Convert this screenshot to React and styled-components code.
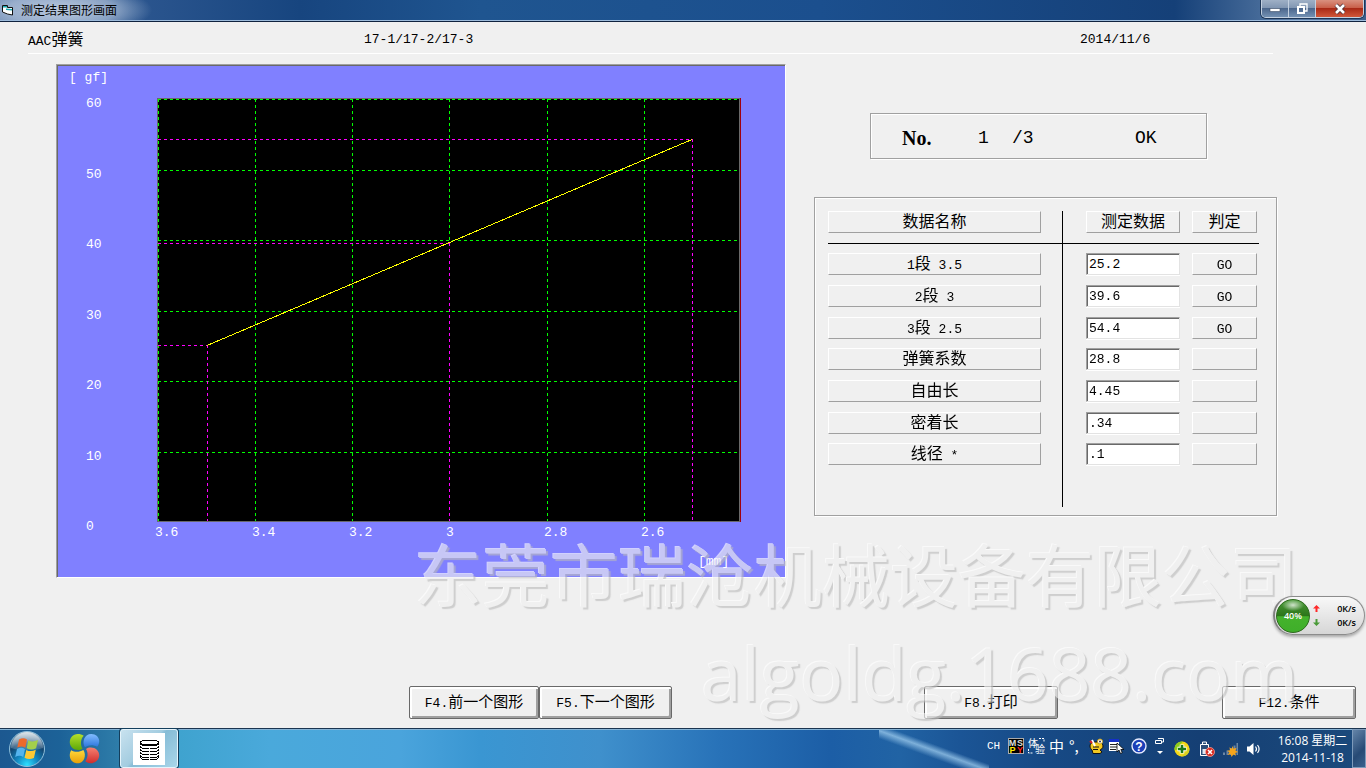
import React from "react";
import styled, { createGlobalStyle, css } from "styled-components";

const MONO = '"Liberation Mono", "Noto Sans CJK SC", monospace';
const CJK = '"Noto Sans CJK SC", sans-serif';
const UI = '"Open Sans", "Noto Sans CJK SC", sans-serif';

const GlobalStyle = createGlobalStyle`
  *, *::before, *::after { box-sizing: border-box; }
  html, body { margin: 0; padding: 0; }
  body { background: #f0f0f0; color: #000; font-family: ${CJK}; font-size: 16px; }
  button, input { font: inherit; color: inherit; margin: 0; }
  h1, p { margin: 0; font-weight: 400; }
`;

const Screen = styled.div`
  position: relative;
  display: flex;
  flex-direction: column;
  min-height: 100vh;
  overflow: hidden;
`;

/* ---------- title bar ---------- */

const TitleBar = styled.header`
  display: flex;
  align-items: flex-start;
  justify-content: space-between;
  height: 22px;
  padding-right: 2px;
  border-bottom: 1px solid #10233f;
  box-shadow: inset 0 -1px 0 #9dbbdb;
  background:
    radial-gradient(ellipse 90px 26px at 62px 10px, rgba(214, 224, 238, 0.8) 0, rgba(190, 205, 225, 0.6) 60%, rgba(150, 175, 205, 0) 100%),
    linear-gradient(90deg, #6684b0 0, #2c568f 130px, #17457f 300px, #1f5590 480px, #1b4f8e 60%, #154078 86%, #5a7ca6 95%, #3c5f8c 100%);
`;

const TitleText = styled.h1`
  display: flex;
  align-items: center;
  gap: 8px;
  height: 20px;
  padding-left: 2px;
  font-size: 12px;
  line-height: 20px;
`;

const Controls = styled.div`
  display: flex;
  height: 18px;
  border: 1px solid #c3d0e0;
  border-top: 0;
  border-radius: 0 0 5px 5px;
  overflow: hidden;
  box-shadow: 0 0 0 1px #1d3556;
`;

const ControlButton = styled.button`
  display: flex;
  align-items: center;
  justify-content: center;
  width: ${(p) => (p.$close ? 47 : 27)}px;
  padding: 0;
  border: 0;
  border-right: 1px solid #c3d0e0;
  background: ${(p) =>
    p.$close
      ? "linear-gradient(#d9917f 0, #c9604a 45%, #a92a16 50%, #d0573a 100%)"
      : "linear-gradient(#9fb0c6 0, #8297b3 45%, #4c678d 50%, #7390b3 100%)"};
  &:last-child { border-right: 0; }
`;

/* ---------- window content ---------- */

const Body = styled.main`
  position: relative;
  flex: 1;
  display: flex;
  flex-direction: column;
  background: #f0f0f0;
`;

const InfoBar = styled.div`
  display: grid;
  grid-template-columns: 336px 1fr 193px;
  align-items: center;
  height: 32px;
  margin: 0 93px 10px 28px;
  padding-top: 4px;
  border-bottom: 1px solid #fff;
  line-height: 24px;
`;

const Latin = styled.span`
  font-family: ${MONO};
  font-size: 13px;
  white-space: pre;
`;

const Workspace = styled.div`
  display: grid;
  grid-template-columns: minmax(0, 1fr) 463px;
  column-gap: 28px;
  align-items: start;
  padding: 0 89px 0 56px;
`;

const ChartPanel = styled.figure`
  margin: 0;
  border: 1px solid;
  border-color: #a0a0a0 #fff #fff #a0a0a0;
  box-shadow: inset 1px 1px 0 #696969;
  background: #8080ff;
  svg { display: block; width: 100%; height: auto; }
`;

const groove = css`
  border: 1px solid #a0a0a0;
  box-shadow: 1px 1px 0 #fff, inset 1px 1px 0 #fff;
`;

const Side = styled.div`
  display: flex;
  flex-direction: column;
  gap: 38px;
  padding-top: 49px;
`;

const Counter = styled.div`
  ${groove}
  display: grid;
  grid-template-columns: 76px 34px 123px auto;
  align-items: center;
  height: 46px;
  margin: 0 70px 0 56px;
  padding: 4px 0 0 31px;
  font-family: ${MONO};
  font-size: 18px;
  line-height: 24px;
`;

const CounterTitle = styled.strong`
  font-family: "Liberation Serif", serif;
  font-size: 20px;
`;

const TablePanel = styled.section`
  ${groove}
  padding: 13px 17px 8px 13px;
`;

const Table = styled.table`
  width: 100%;
  table-layout: fixed;
  border-spacing: 0;
  th, td { padding: 0; vertical-align: top; font-weight: 400; }
  th:first-child, td:first-child { padding-right: 21px; border-right: 1px solid #000; }
  th:nth-child(2), td:nth-child(2) { padding-left: 23px; padding-right: 12px; }
  th:nth-child(3), td:nth-child(3) { padding-right: 2px; }
`;

const HeadRow = styled.tr`
  height: 33px;
  th { border-bottom: 1px solid #000; }
`;

const DataRow = styled.tr`
  height: 32px;
  &:nth-child(3n) { height: 31px; }
  &:last-child { height: 73px; }
  && > * { padding-top: 9px; }
`;

const Plate = styled.div`
  display: block;
  height: 22px;
  border: 1px solid;
  border-color: #fff #a0a0a0 #a0a0a0 #fff;
  line-height: 16px;
  text-align: center;
  white-space: nowrap;
`;

const ValueInput = styled.input`
  display: block;
  width: 100%;
  height: 22px;
  padding: 0 0 0 2px;
  border: 1px solid;
  border-color: #a0a0a0 #e3e3e3 #e3e3e3 #a0a0a0;
  border-radius: 0;
  outline: 0;
  background: #fff;
  box-shadow: inset 1px 1px 0 #696969, 0 1px 0 #fff;
  font-family: ${MONO};
  font-size: 13px;
`;

const Actions = styled.div`
  display: grid;
  grid-template-columns: 409fr 130px 133px 252fr 134px 164fr 134px;
  margin-top: auto;
  padding: 0 10px 9px 0;
`;

const ActionButton = styled.button`
  grid-column: ${(p) => p.$col};
  height: 33px;
  padding: 0;
  border: 1px solid #696969;
  border-radius: 2px;
  background: #f0f0f0;
  box-shadow: inset 2px 2px 0 #fff, inset -2px -2px 0 #a0a0a0;
  font-size: 15px;
  line-height: 28px;
`;

/* ---------- overlays ---------- */

const Watermark = styled.div`
  position: absolute;
  right: 68px;
  bottom: 4px;
  display: flex;
  flex-direction: column;
  align-items: flex-end;
  opacity: 0.64;
  pointer-events: none;
  color: #f0f0f0;
  text-shadow: -1px -1px 0 #fff, 2px 2px 1px #bcbcbc;
  white-space: nowrap;
`;

const WatermarkName = styled.p`
  font-size: 68px;
  line-height: 98px;
`;

const WatermarkSite = styled.p`
  font-family: "Open Sans", sans-serif;
  font-size: 73px;
  line-height: 102px;
`;

const NetMeter = styled.aside`
  position: absolute;
  right: 1px;
  bottom: 93px;
  display: flex;
  align-items: center;
  gap: 3px;
  width: 92px;
  height: 39px;
  padding: 0 8px 0 1px;
  border: 1px solid #8c8c8c;
  border-left: 2px solid #808080;
  border-radius: 20px;
  background: linear-gradient(#f8f8f8, #d6d6d6);
  box-shadow: 0 2px 3px rgba(0, 0, 0, 0.3);
  font-family: ${UI};
  font-size: 9px;
  font-weight: 600;
`;

const MeterBall = styled.div`
  width: 34px;
  height: 34px;
  border: 1px solid #2c6a1c;
  border-radius: 50%;
  background:
    radial-gradient(ellipse 11px 6px at 50% 16%, rgba(255, 255, 255, 0.75), rgba(255, 255, 255, 0)),
    linear-gradient(#4a9a38 0, #2c7419 50%, #45b32c 52%, #3fae2a 100%);
  color: #fff;
  line-height: 32px;
  text-align: center;
`;

const Rates = styled.div`
  flex: 1;
  display: grid;
  grid-template-columns: 8px 1fr;
  align-items: center;
  line-height: 14px;
  text-align: right;
`;

/* ---------- taskbar ---------- */

const Taskbar = styled.footer`
  display: flex;
  align-items: center;
  justify-content: space-between;
  height: 40px;
  border-top: 1px solid #1b3550;
  box-shadow: inset 0 1px 0 #86b4d6;
  background:
    linear-gradient(to top right, transparent 38%, rgba(165, 210, 242, 0.7) 48%, transparent 56%) 70% 0 / 110px 40px no-repeat,
    linear-gradient(90deg, #1c5890 0, #1c6298 60px, #2d7ba8 115px, #3fa3cf 180px, #4aa9db 270px, #4aa4dc 400px, #3a96d2 480px, #3f90cc 600px, #2872b8 720px, #1c5ea6 830px, #2163a4 900px, #1b5596 960px, #174a86 1040px, #153f74 1200px, #1b4a7c 100%);
`;

const TaskGroup = styled.nav`
  display: flex;
  align-items: center;
  height: 100%;
`;

const TaskButton = styled.button`
  display: flex;
  align-items: center;
  justify-content: center;
  width: ${(p) => p.$w}px;
  height: 39px;
  padding: 0;
  border: 0;
  background: none;
  ${(p) =>
    p.$active &&
    css`
      margin-left: 6px;
      border: 1px solid #e6f4fb;
      border-radius: 3px;
      box-shadow: 0 0 0 1px #143e5c;
      background: linear-gradient(135deg, #c8e2ef 0, #a3cce0 45%, #86bcd6 50%, #a9d6ea 100%);
    `}
`;

const Tray = styled.div`
  display: flex;
  align-items: center;
  gap: 4px;
  height: 100%;
  color: #fff;
  svg { display: block; flex: none; overflow: visible; }
`;

const TrayItem = styled.span`
  width: ${(p) => p.$w}px;
  padding-bottom: ${(p) => (p.$low ? 0 : 5)}px;
  font-family: ${(p) => (p.$mono ? MONO : CJK)};
  font-size: ${(p) => (p.$mono ? 11 : 15)}px;
  line-height: 16px;
  white-space: nowrap;
`;

const Clock = styled.time`
  width: 71px;
  font-family: ${UI};
  font-size: 12px;
  line-height: 17px;
  text-align: center;
  white-space: nowrap;
`;

const ShowDesktop = styled.button`
  width: 14px;
  height: 39px;
  padding: 0;
  border: 1px solid #7e9bbb;
  background: linear-gradient(135deg, #6484a8, #274a75 60%, #3a618d);
`;

/* Latin runs are set in the half-width face, everything else in the CJK face. */
function Mixed({ children }) {
  return children
    .split(/([\u0020-\u007e]+)/)
    .filter(Boolean)
    .map((run, i) => (/^[\u0020-\u007e]/.test(run) ? <Latin key={i}>{run}</Latin> : run));
}

const X_TICKS = [
  ["3.6", 101], ["3.4", 198], ["3.2", 295], ["3", 392], ["2.8", 490], ["2.6", 587],
];
const Y_TICKS = [
  ["60", 34], ["50", 105], ["40", 175], ["30", 246], ["20", 316], ["10", 387], ["0", 457],
];
const POINTS = [[150, 280], [392, 178], [635, 74]];

function Chart() {
  return (
    <svg viewBox="0 0 728 512" role="img" aria-label="gf / mm">
      <rect x="100" y="33" width="583" height="424" fill="#696969" />
      <rect x="101" y="34" width="581" height="422" fill="#000" />
      <rect x="683" y="33" width="1" height="424" fill="#a00010" />
      <g shapeRendering="crispEdges" strokeDasharray="3 3" stroke="#00ff00">
        {X_TICKS.map(([t, x]) => (
          <line key={t} x1={x + 0.5} x2={x + 0.5} y1="34" y2={t === "3" ? 178 : 456} />
        ))}
        {Y_TICKS.slice(0, -1).map(([t, y]) => (
          <line key={t} x1="101" x2="682" y1={y + 0.5} y2={y + 0.5} />
        ))}
      </g>
      <g shapeRendering="crispEdges" strokeDasharray="3 3" stroke="#ff00ff">
        {POINTS.map(([x, y]) => (
          <React.Fragment key={x}>
            <line x1="101" x2={x} y1={y + 0.5} y2={y + 0.5} />
            <line x1={x + 0.5} x2={x + 0.5} y1={y} y2="456" />
          </React.Fragment>
        ))}
      </g>
      <line x1="150" y1="280.5" x2="635" y2="74.5" stroke="#ffff00" shapeRendering="crispEdges" />
      <g fill="#fff" fontFamily="Liberation Mono, monospace" fontSize="13" xmlSpace="preserve">
        <text x="12" y="16">{"[ gf]"}</text>
        {Y_TICKS.map(([t, y]) => <text key={t} x="29" y={y + 8}>{t}</text>)}
        {X_TICKS.map(([t, x]) => <text key={t} x={x - 3} y="471">{t}</text>)}
        <text x="641" y="500">[mm]</text>
      </g>
    </svg>
  );
}

const ROWS = [
  ["1段 3.5", "25.2", "GO"],
  ["2段 3", "39.6", "GO"],
  ["3段 2.5", "54.4", "GO"],
  ["弹簧系数", "28.8", ""],
  ["自由长", "4.45", ""],
  ["密着长", ".34", ""],
  ["线径 *", ".1", ""],
];

const ACTIONS = [
  [2, "F4.前一个图形"],
  [3, "F5.下一个图形"],
  [5, "F8.打印"],
  [7, "F12.条件"],
];

const FormIcon = () => (
  <svg width="11" height="12" viewBox="0 0 11 12">
    <path d="M0.5 1.500h5v2h5v7.500l-5-1-5-2z" fill="#fff" stroke="#111" />
    <path d="M1 2h4v1.500H1zM4 4.500l6 .5v1.500L4 6z" fill="#18a8b0" />
  </svg>
);

const StartOrb = () => (
  <svg width="38" height="38" viewBox="0 0 38 38">
    <defs>
      <radialGradient id="orb" cx=".5" cy=".95" r=".9">
        <stop offset="0" stopColor="#2de0ff" />
        <stop offset=".35" stopColor="#1286c0" />
        <stop offset=".7" stopColor="#12446f" />
        <stop offset="1" stopColor="#6f8fa8" />
      </radialGradient>
      <linearGradient id="gloss" x2="0" y2="1">
        <stop offset="0" stopColor="#fff" stopOpacity=".75" />
        <stop offset="1" stopColor="#fff" stopOpacity=".12" />
      </linearGradient>
    </defs>
    <circle cx="19" cy="19" r="17.500" fill="url(#orb)" stroke="#8fc0dc" />
    <path d="M3 18a16 16 0 0 1 32 0c-8 3-24 3-32 0z" fill="url(#gloss)" />
    <path d="M11 9.500c3-1.800 5.500-1.700 8 .1l-1.700 8.200c-2.700-1.800-5-1.700-8-.2z" fill="#ee6a2c" />
    <path d="M20.300 10.200c3 1.700 6 1.500 9.700-.2l-1.900 8.300c-3.300 1.600-6.200 1.600-9.400-.1z" fill="#a3cf4c" />
    <path d="M9 19c3-1.600 5.500-1.500 8 .2l-1.800 7.900c-2.600-1.700-5-1.600-8-.1z" fill="#55b4ee" />
    <path d="M18.300 19.900c3 1.700 6 1.500 9.500-.1l-1.900 8.200c-3.300 1.500-6.200 1.500-9.400-.2z" fill="#ffc934" />
  </svg>
);

const PetalsIcon = () => (
  <svg width="31" height="31" viewBox="0 0 32 32">
    <defs>
      <linearGradient id="pg" x2="0" y2="1"><stop stopColor="#b4e02c" /><stop offset="1" stopColor="#5da808" /></linearGradient>
      <linearGradient id="pb" x2="0" y2="1"><stop stopColor="#82bdff" /><stop offset="1" stopColor="#2b74dc" /></linearGradient>
      <linearGradient id="py" x2="0" y2="1"><stop stopColor="#ffd83c" /><stop offset="1" stopColor="#e8a008" /></linearGradient>
      <linearGradient id="pr" x2="0" y2="1"><stop stopColor="#f58070" /><stop offset="1" stopColor="#cf2d2d" /></linearGradient>
    </defs>
    <path d="M9 1C4 1 .8 5 .8 9.500S4.500 17.500 9.500 17.500c1.800 0 3.300-.5 4.500-1.300-2.600-4.200-2-10 1.200-13.400C13.500 1.600 11.500 1 9 1z" fill="url(#pg)" />
    <path d="M23 1c4.800 0 8.200 3.300 8.200 7.500 0 2.300-.8 4.300-2.200 5.700-3.800-2.200-8.700-2.200-12.600.6C13 9 16 1 23 1z" fill="url(#pb)" />
    <path d="M2.200 17.800c3.900 2.200 8.700 2.100 12.600-.3C18.500 23 15.500 31.200 9 31.200c-4.800 0-8.200-3.400-8.200-8 0-2.100.5-3.900 1.400-5.400z" fill="url(#py)" />
    <path d="M22.500 15c5 0 8.700 3.500 8.700 8s-3.700 8.200-8.700 8.200c-2.200 0-4.200-.7-5.700-2 2.800-3.700 3.200-8.700.8-12.700 1.400-1 3-1.500 4.900-1.500z" fill="url(#pr)" />
  </svg>
);

const StackIcon = () => (
  <svg width="32" height="32" viewBox="0 0 32 32" shapeRendering="crispEdges">
    <rect width="32" height="32" fill="#fff" />
    <g fill="none" stroke="#000">
      <ellipse cx="16.500" cy="9.500" rx="9" ry="2.500" />
      {[10, 13, 16, 19, 22, 24].map((y) => (
        <path key={y} d={`M7.500 ${y}c0 4 18 4 18 0`} />
      ))}
      <path d="M7.500 10v14M25.500 10v14" strokeDasharray="2 1" />
    </g>
  </svg>
);

const ImeIcon = () => (
  <svg width="16" height="16" viewBox="0 0 16 16">
    <rect width="16" height="16" fill="#000" />
    <path d="M0 .5h16M.5 0v16M15.500 0v16M0 15.500h16" stroke="#aaa" />
    <g fontFamily="Liberation Sans, sans-serif" fontSize="9" fontWeight="700" textAnchor="middle">
      <text x="4.500" y="7.500" fill="#ddd">M</text>
      <text x="12" y="7.500" fill="#ddd">S</text>
      <text x="4.500" y="15" fill="#ffe800">P</text>
      <text x="12" y="15" fill="#ff2020">Y</text>
    </g>
  </svg>
);

const TrialIcon = () => (
  <svg width="17" height="16" viewBox="0 0 17 16">
    <g fill="#fff" fontFamily="Noto Sans CJK SC, sans-serif" fontSize="10">
      <text x="0" y="9">体</text>
      <text x="7" y="15">验</text>
    </g>
    <path d="M11 .5h5v4M.5 11v4h4" fill="none" stroke="#fff" strokeDasharray="2 1" />
  </svg>
);

const PaletteIcon = () => (
  <svg width="15" height="16" viewBox="0 0 15 16">
    <path d="M1 8c0-3 3-4 6-4s7 1 7 4-2 3-3 4l2 2-2 1.500H4L3 12c-1-1-2-2-2-4z" fill="#f2c820" stroke="#111" />
    <path d="M4 9h6M4 11.500h5" stroke="#111" />
    <path d="M3 2l3 6" stroke="#fff" strokeWidth="2" />
    <circle cx="11" cy="3.500" r="2.500" fill="#fff" stroke="#caa018" />
    <circle cx="11" cy="3.500" r="1" fill="#333" />
    <path d="M1 3l2 2" stroke="#e02020" strokeWidth="2" />
  </svg>
);

const MenuCursorIcon = () => (
  <svg width="17" height="16" viewBox="0 0 17 16">
    <path d="M1 1h10v12H1z" fill="#fff" />
    <path d="M1 1h10v3H1z" fill="#1430c8" />
    <path d="M2 6.500h7M2 9h7M2 11.500h6" stroke="#222" />
    <path d="M9 5v9l2-2 1.500 3.500 1.800-.8-1.500-3.200H16z" fill="#fff" stroke="#000" strokeWidth=".8" />
  </svg>
);

const HelpIcon = () => (
  <svg width="16" height="16" viewBox="0 0 16 16">
    <circle cx="8" cy="8" r="7" fill="#1c3fb8" stroke="#e8ecff" strokeWidth="1.400" />
    <text x="8" y="12.500" textAnchor="middle" fill="#fff" fontFamily="Liberation Sans, sans-serif" fontSize="12" fontWeight="700">?</text>
  </svg>
);

const ExpandIcon = () => (
  <svg width="10" height="18" viewBox="0 0 10 18">
    <path d="M3 1.500h5.500V5H6.500M.5 3.500h6v3h-6z" fill="none" stroke="#fff" />
    <path d="M2 14h6l-3 3z" fill="#fff" />
  </svg>
);

const ShieldIcon = () => (
  <svg width="16" height="16" viewBox="0 0 16 16">
    <circle cx="8" cy="8" r="7.500" fill="#f4d818" />
    <path d="M.6 9.500C-.2 4 4 0 9.500.6 5.500 2.200 8 5 5 7.500 3.500 9 1.500 8.500.6 9.500z" fill="#8ccc1c" />
    <path d="M15.400 7c.6 5-3 9-8.500 8.400C10.500 14 10 11 12 9.500c1.300-1 2.500-1 3.400-2.500z" fill="#d8d020" />
    <path d="M8 3.500v9M3.500 8h9" stroke="#fff" strokeWidth="4.500" />
    <path d="M8 4v8M4 8h8" stroke="#1c7a18" strokeWidth="2.600" />
  </svg>
);

const BatteryIcon = () => (
  <svg width="16" height="16" viewBox="0 0 16 16">
    <path d="M1.500 3.500h8v11h-8zM3.500 1h4v2.500h-4z" fill="#2a4d78" stroke="#fff" />
    <path d="M3.500 8h4v5h-4z" fill="#dfe8f2" />
    <circle cx="11" cy="11" r="4.500" fill="#d8281e" stroke="#f8b0a8" strokeWidth=".7" />
    <path d="M9 9l4 4M13 9l-4 4" stroke="#fff" strokeWidth="1.600" />
  </svg>
);

const SignalIcon = () => (
  <svg width="17" height="16" viewBox="0 0 17 16">
    <path d="M1 14v-2.500h2V14zM4.500 14V9.500h2V14zM8 14V7h2v7zM11.500 14V4.500h2V14zM14.500 14V2H16v12z" fill="#6c86a4" />
    <path d="M10.500 5l1.200 2.800 2.900-1-1.200 2.700 2.600 1.400-2.800 1 .8 2.900-2.600-1.300L9.500 16l-.7-2.800-3 .7 1.500-2.600L5 9.700l2.900-.5L7.500 6.300l2.200 1.700z" fill="#f5a51c" />
  </svg>
);

const SpeakerIcon = () => (
  <svg width="16" height="16" viewBox="0 0 16 16">
    <path d="M1 5.500h2.500L7.500 2v12l-4-3.500H1z" fill="#fff" />
    <path d="M9.500 5.500c1.200 1.500 1.200 3.500 0 5M11.500 4c2 2.500 2 5.500 0 8" fill="none" stroke="#fff" strokeWidth="1.200" />
  </svg>
);

const TRAY = [
  [17, "CH", false, true],
  [16, <ImeIcon />],
  [17, <TrialIcon />],
  [16, "中"],
  [16, "°,"],
  [15, <PaletteIcon />],
  [19, <MenuCursorIcon />],
  [20, <HelpIcon />],
  [15, <ExpandIcon />],
  [21, <ShieldIcon />, true],
  [19, <BatteryIcon />, true],
  [20, <SignalIcon />, true],
  [27, <SpeakerIcon />, true],
];

const RateArrow = ({ up }) => (
  <svg width="7" height="7" viewBox="0 0 7 7">
    <path
      d={up ? "M3.500 0L7 3.500H4.500V7h-2V3.500H0z" : "M3.500 7L7 3.500H4.500V0h-2v3.500H0z"}
      fill={up ? "#ff2828" : "#4a9a38"}
    />
  </svg>
);

export default function App() {
  return (
    <>
      <GlobalStyle />
      <Screen>
        <TitleBar>
          <TitleText><FormIcon />测定结果图形画面</TitleText>
          <Controls>
            <ControlButton type="button" aria-label="最小化">
              <svg width="12" height="12" viewBox="0 0 12 12">
                <path d="M1 5.500h10v3H1z" fill="#fff" stroke="#3d4f68" strokeWidth=".6" />
              </svg>
            </ControlButton>
            <ControlButton type="button" aria-label="还原">
              <svg width="12" height="12" viewBox="0 0 12 12">
                <path d="M4 3V1h7v7H9" fill="none" stroke="#fff" strokeWidth="1.300" />
                <path d="M2 4h6v6H2z" fill="none" stroke="#fff" strokeWidth="2" />
              </svg>
            </ControlButton>
            <ControlButton type="button" aria-label="关闭" $close>
              <svg width="12" height="12" viewBox="0 0 12 12">
                <path d="M2 2l8 8M10 2l-8 8" stroke="#4a3038" strokeWidth="4.200" />
                <path d="M2 2l8 8M10 2l-8 8" stroke="#fff" strokeWidth="2.600" />
              </svg>
            </ControlButton>
          </Controls>
        </TitleBar>

        <Body>
          <InfoBar>
            <span><Mixed>AAC弹簧</Mixed></span>
            <Latin>17-1/17-2/17-3</Latin>
            <Latin>2014/11/6</Latin>
          </InfoBar>

          <Workspace>
            <ChartPanel><Chart /></ChartPanel>
            <Side>
              <Counter>
                <CounterTitle>No.</CounterTitle>
                <span>1</span>
                <span>/3</span>
                <span>OK</span>
              </Counter>
              <TablePanel>
                <Table>
                  <colgroup>
                    <col />
                    <col width="129" />
                    <col width="67" />
                  </colgroup>
                  <thead>
                    <HeadRow>
                      <th scope="col"><Plate>数据名称</Plate></th>
                      <th scope="col"><Plate>测定数据</Plate></th>
                      <th scope="col"><Plate>判定</Plate></th>
                    </HeadRow>
                  </thead>
                  <tbody>
                    {ROWS.map(([name, value, verdict], i) => (
                      <DataRow key={name}>
                        <td><Plate as="label" htmlFor={`value-${i}`}><Mixed>{name}</Mixed></Plate></td>
                        <td>
                          <ValueInput
                            id={`value-${i}`}
                            defaultValue={value}
                            autoFocus={i === 0}
                            onFocus={(e) => e.target.setSelectionRange(0, 0)}
                          />
                        </td>
                        <td><Plate><Mixed>{verdict}</Mixed></Plate></td>
                      </DataRow>
                    ))}
                  </tbody>
                </Table>
              </TablePanel>
            </Side>
          </Workspace>

          <Actions>
            {ACTIONS.map(([col, label]) => (
              <ActionButton key={col} type="button" $col={col}><Mixed>{label}</Mixed></ActionButton>
            ))}
          </Actions>

          <Watermark>
            <WatermarkName>东莞市瑞沧机械设备有限公司</WatermarkName>
            <WatermarkSite>algoldg.1688.com</WatermarkSite>
          </Watermark>

          <NetMeter>
            <MeterBall>40%</MeterBall>
            <Rates>
              <RateArrow up /><span>0K/s</span>
              <RateArrow /><span>0K/s</span>
            </Rates>
          </NetMeter>
        </Body>

        <Taskbar>
          <TaskGroup>
            <TaskButton type="button" aria-label="开始" $w={54}><StartOrb /></TaskButton>
            <TaskButton type="button" aria-label="浏览器" $w={60}><PetalsIcon /></TaskButton>
            <TaskButton type="button" aria-label="测定结果图形画面" $w={58} $active><StackIcon /></TaskButton>
          </TaskGroup>
          <Tray>
            {TRAY.map(([w, content, low, mono], i) => (
              <TrayItem key={i} $w={w} $low={low} $mono={mono}>{content}</TrayItem>
            ))}
            <Clock>16:08 星期二<br />2014-11-18</Clock>
            <ShowDesktop type="button" aria-label="显示桌面" />
          </Tray>
        </Taskbar>
      </Screen>
    </>
  );
}
